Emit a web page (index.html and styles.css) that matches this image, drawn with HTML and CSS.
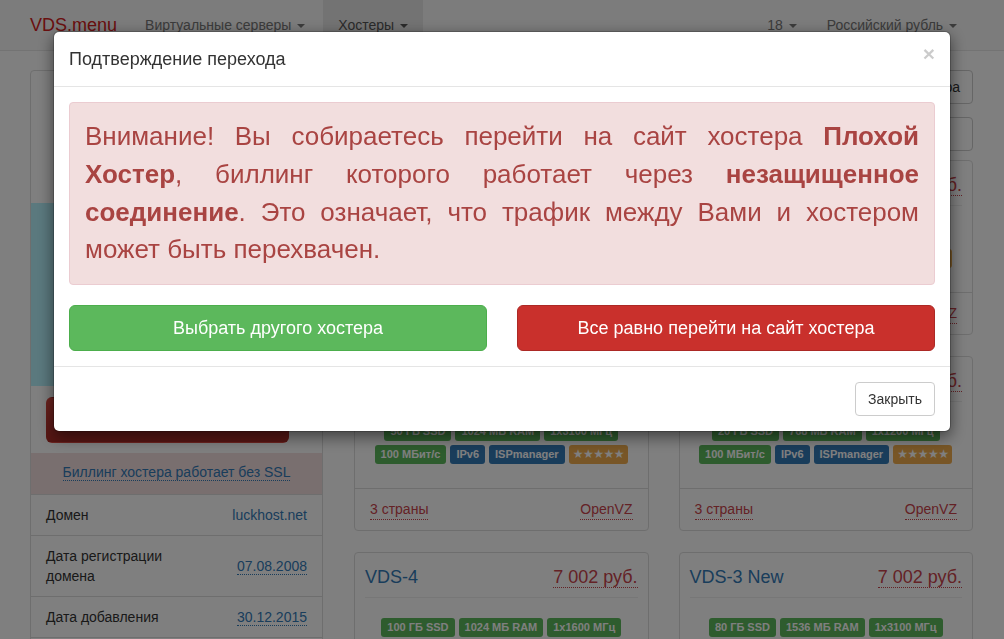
FILE: index.html
```html
<!DOCTYPE html>
<html lang="ru">
<head>
<meta charset="utf-8">
<title>VDS.menu — LuckHost</title>
<link rel="stylesheet" href="styles.css">
</head>
<body>
<nav class="navbar">
  <div class="nav-inner">
    <a class="brand" href="#">VDS.menu</a>
    <ul class="nav-list nav-left">
      <li><a href="#">Виртуальные серверы <span class="caret"></span></a></li>
      <li class="active"><a href="#">Хостеры <span class="caret"></span></a></li>
    </ul>
    <ul class="nav-list nav-right">
      <li><a href="#">18 <span class="caret"></span></a></li>
      <li><a href="#">Российский рубль <span class="caret"></span></a></li>
    </ul>
  </div>
</nav>

<div class="page">
  <aside class="host-panel">
    <div class="host-top">
      <h2 class="host-name">LuckHost</h2>
      <p class="host-meta">Рейтинг хостера: 4.6</p>
    </div>
    <div class="host-logo"><span>LuckHost</span></div>
    <div class="host-action"><a class="btn btn-lg btn-site" href="#">Перейти на сайт хостера</a></div>
    <div class="ssl-row"><a class="dotted" href="#">Биллинг хостера работает без SSL</a></div>
    <table class="info">
      <tr><td class="k">Домен</td><td class="v">luckhost.net</td></tr>
      <tr><td class="k">Дата регистрации домена</td><td class="v"><span class="dotted">07.08.2008</span></td></tr>
      <tr><td class="k">Дата добавления</td><td class="v"><span class="dotted">30.12.2015</span></td></tr>
      <tr><td class="k">Количество тарифов</td><td class="v">12</td></tr>
    </table>
  </aside>

  <main class="plans">
    <div class="toolbar">
      <a class="btn btn-default btn-link-text" href="#">Все тарифы хостера</a>
    </div>
    <input class="search" type="text" placeholder="Поиск по тарифам">
    <div class="grid">
      <div class="card">
        <div class="card-body">
          <div class="card-head"><span class="plan">VDS-1</span><span class="price">1 750 руб.</span></div>
          <div class="labels"><span class="label l-green">20 ГБ SSD</span><span class="label l-green">512 МБ RAM</span><span class="label l-green">1x2400 МГц</span></div>
          <div class="labels"><span class="label l-green">100 МБит/с</span><span class="label l-blue">IPv6</span><span class="label l-blue">ISPmanager</span><span class="label l-orange">★★★★★</span></div>
        </div>
        <div class="card-foot"><span class="dotted red">3 страны</span><span class="dotted red">OpenVZ</span></div>
      </div>
      <div class="card">
        <div class="card-body">
          <div class="card-head"><span class="plan">VDS-1 New</span><span class="price">1 750 руб.</span></div>
          <div class="labels"><span class="label l-green">10 ГБ SSD</span><span class="label l-green">512 МБ RAM</span><span class="label l-green">1x1200 МГц</span></div>
          <div class="labels"><span class="label l-green">100 МБит/с</span><span class="label l-blue">IPv6</span><span class="label l-blue">ISPmanager</span><span class="label l-orange">★★★★★</span></div>
        </div>
        <div class="card-foot"><span class="dotted red">3 страны</span><span class="dotted red">OpenVZ</span></div>
      </div>
      <div class="card">
        <div class="card-body">
          <div class="card-head"><span class="plan">VDS-3</span><span class="price">5 252 руб.</span></div>
          <div class="labels"><span class="label l-green">50 ГБ SSD</span><span class="label l-green">1024 МБ RAM</span><span class="label l-green">1x3100 МГц</span></div>
          <div class="labels"><span class="label l-green">100 МБит/с</span><span class="label l-blue">IPv6</span><span class="label l-blue">ISPmanager</span><span class="label l-orange">★★★★★</span></div>
        </div>
        <div class="card-foot"><span class="dotted red">3 страны</span><span class="dotted red">OpenVZ</span></div>
      </div>
      <div class="card">
        <div class="card-body">
          <div class="card-head"><span class="plan">VDS-2 New</span><span class="price">3 502 руб.</span></div>
          <div class="labels"><span class="label l-green">20 ГБ SSD</span><span class="label l-green">768 МБ RAM</span><span class="label l-green">1x1200 МГц</span></div>
          <div class="labels"><span class="label l-green">100 МБит/с</span><span class="label l-blue">IPv6</span><span class="label l-blue">ISPmanager</span><span class="label l-orange">★★★★★</span></div>
        </div>
        <div class="card-foot"><span class="dotted red">3 страны</span><span class="dotted red">OpenVZ</span></div>
      </div>
      <div class="card">
        <div class="card-body">
          <div class="card-head"><span class="plan">VDS-4</span><span class="price">7 002 руб.</span></div>
          <div class="labels"><span class="label l-green">100 ГБ SSD</span><span class="label l-green">1024 МБ RAM</span><span class="label l-green">1x1600 МГц</span></div>
          <div class="labels"><span class="label l-green">100 МБит/с</span><span class="label l-blue">IPv6</span><span class="label l-blue">ISPmanager</span><span class="label l-orange">★★★★★</span></div>
        </div>
        <div class="card-foot"><span class="dotted red">3 страны</span><span class="dotted red">OpenVZ</span></div>
      </div>
      <div class="card">
        <div class="card-body">
          <div class="card-head"><span class="plan">VDS-3 New</span><span class="price">7 002 руб.</span></div>
          <div class="labels"><span class="label l-green">80 ГБ SSD</span><span class="label l-green">1536 МБ RAM</span><span class="label l-green">1x3100 МГц</span></div>
          <div class="labels"><span class="label l-green">100 МБит/с</span><span class="label l-blue">IPv6</span><span class="label l-blue">ISPmanager</span><span class="label l-orange">★★★★★</span></div>
        </div>
        <div class="card-foot"><span class="dotted red">3 страны</span><span class="dotted red">OpenVZ</span></div>
      </div>
    </div>
  </main>
</div>

<div class="backdrop"></div>
<div class="modal">
  <div class="modal-dialog">
    <div class="modal-content">
      <div class="modal-header">
        <h4 class="modal-title">Подтверждение перехода</h4>
        <button class="close" type="button">×</button>
      </div>
      <div class="modal-body">
        <div class="alert">Внимание! Вы собираетесь перейти на сайт хостера <b>Плохой Хостер</b>, биллинг которого работает через <b>незащищенное соединение</b>. Это означает, что трафик между Вами и хостером может быть перехвачен.</div>
        <div class="choice">
          <a class="btn btn-lg btn-success" href="#">Выбрать другого хостера</a>
          <a class="btn btn-lg btn-danger" href="#">Все равно перейти на сайт хостера</a>
        </div>
      </div>
      <div class="modal-footer">
        <button class="btn btn-default" type="button">Закрыть</button>
      </div>
    </div>
  </div>
</div>
</body>
</html>
```

FILE: styles.css
```css
* { box-sizing: border-box; }
html, body { margin: 0; height: 100%; overflow: hidden; }
body {
  font-family: "Liberation Sans", Arial, Helvetica, sans-serif;
  font-size: 14px;
  line-height: 1.42857;
  color: #333;
  background: #fff;
}
a { color: #337ab7; text-decoration: none; }

/* navbar */
.navbar { height: 51px; background: #f8f8f8; border-bottom: 1px solid #e7e7e7; }
.nav-inner { display: flex; height: 50px; padding: 0 32px 0 15px; }
.brand { padding: 15px 13px 15px 15px; font-size: 18px; line-height: 20px; color: #d42020; }
.nav-list { display: flex; list-style: none; margin: 0; padding: 0; }
.nav-list a { display: block; padding: 15px; line-height: 20px; color: #777; }
.nav-left li:first-child a { padding-right: 18px; }
.nav-list .active a { background: #e7e7e7; color: #555; }
.nav-right { margin-left: auto; }
.caret {
  display: inline-block; width: 0; height: 0; margin-left: 2px; vertical-align: middle;
  border-top: 4px solid; border-left: 4px solid transparent; border-right: 4px solid transparent;
}

/* page */
.page { display: flex; gap: 31px; padding: 19px 31px 0 30px; }
.host-panel { width: 293px; flex: none; border: 1px solid #ddd; border-radius: 4px; background: #fff; }
.host-top { height: 132px; padding: 20px 15px; text-align: center; }
.host-name { margin: 10px 0 8px; font-size: 24px; font-weight: normal; }
.host-meta { margin: 0; color: #777; }
.host-logo { height: 183px; background: #b6f2fd; display: flex; align-items: center; justify-content: center; font-size: 30px; color: #2a6f86; }
.host-action { padding: 11px 15px 10px; }
.btn-site {
  display: block; background: linear-gradient(#d9473f, #ac2b26); border-color: #a12a25; color: #fff;
}
.ssl-row { padding: 10px 15px 11px; background: #f2dede; text-align: center; }
.dotted { border-bottom: 1px dotted; }
.info { width: 100%; border-collapse: collapse; }
.info td { border-top: 1px solid #ddd; padding: 10px 0; vertical-align: middle; line-height: 20px; }
.info .k { width: 55%; padding-left: 15px; }
.info .v { text-align: right; padding-right: 15px; color: #337ab7; }

.plans { flex: 1; min-width: 0; }
.toolbar { display: flex; justify-content: flex-end; }
.btn-link-text { color: #337ab7; padding-right: 16px; }
.search {
  display: block; width: 100%; height: 34px; margin-top: 13px; padding: 6px 12px;
  border: 1px solid #ccc; border-radius: 4px; font: inherit;
}
.grid { display: grid; grid-template-columns: 1fr 1fr; column-gap: 30px; row-gap: 21px; margin-top: 9px; }
.card { border: 1px solid #ddd; border-radius: 4px; background: #fff; }
.card-body { padding: 10px 10px 24px; }
.card-head {
  display: flex; justify-content: space-between; align-items: center;
  height: 28px; font-size: 18px; line-height: 22px;
  border-bottom: 1px solid #eee; box-sizing: content-box; padding-bottom: 6px; margin-bottom: 20px;
}
.plan { color: #337ab7; }
.price { color: #c9444c; border-bottom: 1px dotted #c9444c; line-height: 20px; }
.labels { display: flex; justify-content: center; gap: 4px; }
.labels + .labels { margin-top: 4px; }
.label {
  display: inline-block; padding: 3px 6px 4px; font-size: 11px; line-height: 12px; font-weight: bold;
  color: #fff; border-radius: 3px; white-space: nowrap;
}
.l-green { background: #5cb85c; }
.l-blue { background: #337ab7; }
.l-orange {
  background: #f0ad4e; font-family: "DejaVu Sans", sans-serif; font-weight: normal;
  font-size: 12px; padding: 3px 4px 4px; letter-spacing: -0.5px;
}
.card-foot {
  display: flex; justify-content: space-between; padding: 10px 15px; border-top: 1px solid #ddd; line-height: 20px;
}
.red { color: #c9444c; }

/* modal */
.backdrop {
  position: fixed; top: 0; right: 0; bottom: 0; left: 0; z-index: 10;
  width: 100%; height: 100%; background-color: rgba(0, 0, 0, 0.5);
}
.modal { position: fixed; top: 0; right: 0; bottom: 0; left: 0; z-index: 20; overflow: hidden; }
.modal-dialog { width: 898px; margin: 31px auto; }
.modal-content {
  background: #fff; border: 1px solid rgba(0, 0, 0, .2); border-radius: 6px;
  box-shadow: 0 5px 15px rgba(0, 0, 0, .5); background-clip: padding-box;
}
.modal-header {
  display: flex; justify-content: space-between; align-items: flex-start;
  padding: 15px; border-bottom: 1px solid #e5e5e5;
}
.modal-title { margin: 0; font-size: 18px; line-height: 24px; font-weight: normal; color: #333; }
.close {
  margin-top: -4px; padding: 0; border: 0; background: none; font-family: inherit;
  font-size: 21px; font-weight: bold; line-height: 1; color: #000; opacity: .2; text-shadow: 0 1px 0 #fff;
}
.modal-body { padding: 15px; }
.alert {
  margin: 0 0 20px; padding: 15px; border: 1px solid #ebccd1; border-radius: 4px;
  background: #f2dede; color: #a94442; font-size: 26px; line-height: 37.75px; text-align: justify;
}
.choice { display: grid; grid-template-columns: 1fr 1fr; gap: 30px; }
.btn {
  display: inline-block; padding: 6px 12px; border: 1px solid transparent; border-radius: 4px;
  font-family: inherit; font-size: 14px; line-height: 20px; text-align: center; white-space: nowrap;
}
.btn-lg { padding: 10px 16px; font-size: 18px; line-height: 24px; border-radius: 6px; }
.btn-success { background: #5cb85c; border-color: #4cae4c; color: #fff; }
.btn-danger { background: #c9302c; border-color: #ac2925; color: #fff; }
.btn-default { background: #fff; border-color: #ccc; color: #333; }
.modal-footer { display: flex; justify-content: flex-end; padding: 15px; border-top: 1px solid #e5e5e5; }
```
